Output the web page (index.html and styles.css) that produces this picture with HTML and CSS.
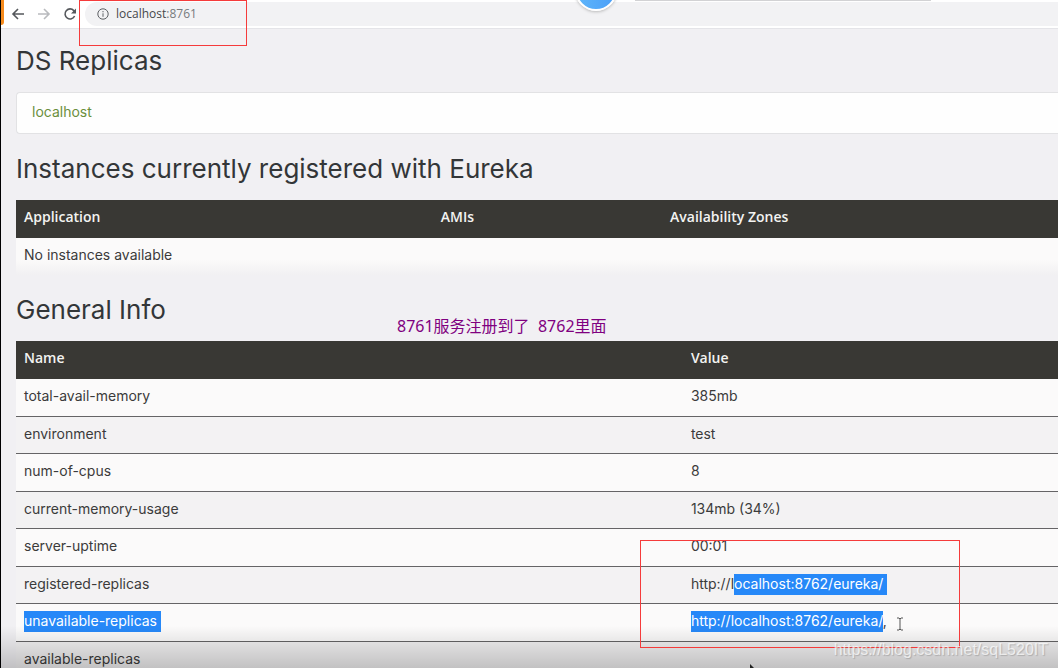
FILE: index.html
```
<!DOCTYPE html>
<html lang="en">
<head>
<meta charset="utf-8">
<title>Eureka</title>
<link rel="stylesheet" href="styles.css">
</head>
<body>
<div class="screen">
  <header class="browser-bar">
    <span class="tab-accent"></span>
    <nav class="nav-buttons">
      <button type="button" class="nav-button" aria-label="Back"><svg viewBox="0 0 16 16" width="16" height="16"><path d="M14 8H3M8 3L3 8l5 5"/></svg></button>
      <button type="button" class="nav-button nav-button-off" aria-label="Forward"><svg viewBox="0 0 16 16" width="16" height="16"><path d="M2 8h11M8 3l5 5-5 5"/></svg></button>
      <button type="button" class="nav-button" aria-label="Reload"><svg viewBox="0 0 16 16" width="16" height="16"><path d="M12.6 10A5 5 0 1 1 11.8 4.6L13 6"/><path class="solid" d="M14 2.5V7.500H9z"/></svg></button>
    </nav>
    <div class="address">
      <svg class="info-icon" viewBox="0 0 12 12" width="12" height="12"><circle cx="6" cy="6" r="5.200"/><path d="M6 5.300v3.500M6 3v1.300"/></svg>
      <span class="url">localhost<span class="port">:8761</span></span>
    </div>
    <span class="bubble"></span>
    <span class="popup-edge"></span>
  </header>

  <main class="content">
    <h1 class="heading">DS Replicas</h1>
    <ul class="replicas"><li><a href="#">localhost</a></li></ul>

    <h1 class="heading">Instances currently registered with Eureka</h1>
    <table class="grid instances">
      <thead><tr><th class="col-app">Application</th><th class="col-ami">AMIs</th><th>Availability Zones</th></tr></thead>
      <tbody><tr><td colspan="3">No instances available</td></tr></tbody>
    </table>

    <h1 class="heading">General Info</h1>
    <table class="grid general">
      <thead><tr><th class="col-name">Name</th><th>Value</th></tr></thead>
      <tbody>
        <tr><td>total-avail-memory</td><td>385mb</td></tr>
        <tr><td>environment</td><td>test</td></tr>
        <tr><td>num-of-cpus</td><td>8</td></tr>
        <tr><td>current-memory-usage</td><td>134mb (34%)</td></tr>
        <tr><td>server-uptime</td><td>00:01</td></tr>
        <tr><td>registered-replicas</td><td>http://l<span class="selected selected-end">ocalhost:8762/eureka/</span></td></tr>
        <tr><td><span class="selected selected-end">unavailable-replicas</span></td><td><span class="selected">http://localhost:8762/eureka/</span>,</td></tr>
        <tr><td>available-replicas</td><td></td></tr>
      </tbody>
    </table>
  </main>

  <div class="shade"></div>
  <div class="mark mark-address"></div>
  <div class="mark mark-replicas"></div>
  <p class="note">8761服务注册到了&nbsp; 8762里面</p>
  <svg class="text-cursor" viewBox="0 0 8 14" width="8" height="14"><path d="M1 1h2l1 1 1-1h2M4 2v10M1 13h2l1-1 1 1h2"/></svg>
  <svg class="pointer" viewBox="0 0 6 8" width="6" height="8"><path d="M1 0v8l5-3z"/></svg>
  <p class="watermark">https://blog.csdn.net/sqL520IT</p>
</div>
</body>
</html>
```
FILE: styles.css
```
* { box-sizing: border-box; }

body {
  margin: 0;
  background: #f1f0f3;
  color: #3b3b3b;
  font-family: Inter, "Noto Sans CJK SC", sans-serif;
  font-size: 14px;
  line-height: 20px;
}

.screen {
  position: relative;
  height: 100vh;
  overflow: hidden;
  border-left: 1px solid #000;
}

.browser-bar {
  position: relative;
  display: flex;
  align-items: center;
  height: 29px;
  padding-left: 9px;
  background: #fff;
  border-bottom: 1px solid #e4e4e8;
}

.tab-accent {
  position: absolute;
  left: 0;
  top: 0;
  width: 3px;
  height: 25px;
  background: #f58a1c;
  border-bottom-right-radius: 3px;
}

.nav-buttons { display: flex; gap: 10px; }

.nav-button {
  display: flex;
  padding: 0;
  border: 0;
  background: none;
  color: #55585c;
}

.nav-button-off { color: #b9bbbe; }

.nav-button svg { fill: none; stroke: currentColor; stroke-width: 1.600; }
.nav-button .solid { fill: currentColor; stroke: none; }

.address {
  display: flex;
  flex: 1;
  align-items: center;
  gap: 7px;
  height: 24px;
  margin-left: 7px;
  padding-left: 12px;
  border-top-left-radius: 12px;
  border-bottom-left-radius: 12px;
  background: #f2f2f4;
}

.info-icon { fill: none; stroke: #5d6064; stroke-width: 1; }

.url { font-family: "Open Sans", sans-serif; font-size: 12px; color: #45484b; }
.port { color: #777a7d; }

.bubble {
  position: absolute;
  left: 574px;
  top: -31px;
  width: 42px;
  height: 42px;
  border: 2px solid #fff;
  border-radius: 50%;
  background: linear-gradient(90deg, #5eb5fa, #4a9ff8);
  box-shadow: 0 1px 3px #bbb;
}

.popup-edge {
  position: absolute;
  left: 634px;
  top: 0;
  width: 296px;
  height: 1px;
  background: #d2d2d4;
}

.content { padding-left: 15px; }

.heading {
  margin: 0;
  padding: 17px 0 16px;
  color: #333638;
  font-size: 26px;
  font-weight: 400;
  line-height: 30px;
}

.replicas + .heading,
.grid + .heading { padding-top: 20px; }

.replicas {
  margin: 0;
  padding: 9px 15px 11px;
  list-style: none;
  background: #fefefe;
  border: 1px solid #e2e2e4;
  border-right: 0;
  border-radius: 4px 0 0 4px;
}

.replicas a { color: #6b8f3c; text-decoration: none; }

.grid { width: 100%; border-collapse: separate; border-spacing: 0; table-layout: fixed; }

.grid th {
  padding: 7px 8px 11px;
  background: #393834;
  color: #f3f3f1;
  font-family: "Open Sans", sans-serif;
  font-weight: 600;
  text-align: left;
}

.grid td { padding: 7px 8px 9px; }

.col-app { width: 40%; }
.col-ami { width: 22%; }
.col-name { width: 64%; }

.instances tbody { background: linear-gradient(#fbfafa 60%, #f1f0f2); }
.instances td { padding-bottom: 10px; }

.general td { border-bottom: 1px solid #656466; }
.general tbody tr:nth-child(odd) { background: #fbfafa; }
.general tbody tr:nth-child(odd) td { padding-bottom: 10px; }
.general tbody tr:nth-child(even) { background: #f3f2f3; }

.selected { padding: 1px 0 3px; background: #2688f8; color: #fff; }
.selected-end { padding-right: 4px; }

.shade {
  position: absolute;
  left: 0;
  right: 0;
  bottom: 0;
  height: 42px;
  background: linear-gradient(rgba(0, 0, 0, 0), rgba(0, 0, 0, .2));
}

.mark { position: absolute; border: 1px solid #f53b3b; }
.mark-address { left: 78px; top: 0; width: 168px; height: 46px; }
.mark-replicas { left: 639px; top: 540px; width: 320px; height: 108px; }

.note {
  position: absolute;
  left: 396px;
  top: 316px;
  margin: 0;
  color: #800080;
  font-family: "Noto Sans", "Noto Sans CJK SC", sans-serif;
  font-size: 16px;
}

.text-cursor { position: absolute; left: 895px; top: 617px; fill: none; stroke: #555; }
.pointer { position: absolute; left: 748px; top: 664px; fill: #222; }

.watermark {
  position: absolute;
  right: 10px;
  bottom: 8px;
  margin: 0;
  color: rgba(255, 255, 255, .7);
  font-family: "Liberation Sans", sans-serif;
  font-size: 16px;
  text-shadow: 1px 1px 1px rgba(90, 90, 90, .3);
}
```
